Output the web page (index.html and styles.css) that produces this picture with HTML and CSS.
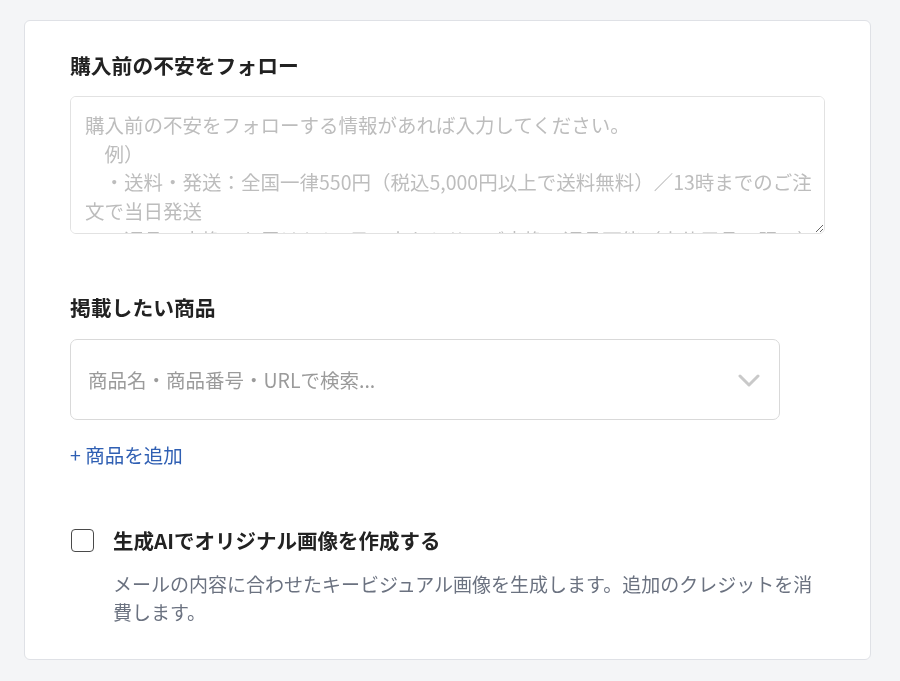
FILE: index.html
```html
<!DOCTYPE html>
<html lang="ja">
<head>
<meta charset="UTF-8">
<meta name="viewport" content="width=device-width, initial-scale=1.0">
<title>メール作成</title>
<link rel="stylesheet" href="styles.css">
</head>
<body>
<div class="card">
  <div class="field">
    <h2 class="label">購入前の不安をフォロー</h2>
    <textarea class="textarea" placeholder="購入前の不安をフォローする情報があれば入力してください。&#10;　例）&#10;　・送料・発送：全国一律550円（税込5,000円以上で送料無料）／13時までのご注文で当日発送&#10;　・返品・交換：お届けから7日以内ならサイズ交換・返品可能（未使用品に限る）"></textarea>
  </div>

  <div class="field products">
    <h2 class="label">掲載したい商品</h2>
    <div class="select">
      <span class="select-placeholder">商品名・商品番号・URLで検索...</span>
      <svg class="chevron" width="22" height="14" viewBox="0 0 22 14">
        <path d="M2 2 L11 11 L20 2" fill="none" stroke="#c9c9c9" stroke-width="3" stroke-linecap="round" stroke-linejoin="round"/>
      </svg>
    </div>
    <a class="add-link" href="#">+ 商品を追加</a>
  </div>

  <div class="ai-option">
    <label class="check-row">
      <input type="checkbox" class="checkbox">
      <span class="check-label">生成AIでオリジナル画像を作成する</span>
    </label>
    <p class="help">メールの内容に合わせたキービジュアル画像を生成します。追加のクレジットを消費します。</p>
  </div>
</div>
</body>
</html>
```

FILE: styles.css
```css
body {
  margin: 0;
  padding: 20px 0 0 24px;
  background: #f4f5f7;
  font-family: "Noto Sans CJK JP", "Noto Sans", sans-serif;
  color: #222;
}
.card {
  width: 847px;
  box-sizing: border-box;
  background: #fff;
  border: 1px solid #dfe1e6;
  border-radius: 6px;
  padding: 29px 45px 33px 45px;
}
.label {
  margin: 0;
  font-size: 20.8px;
  line-height: 31px;
  font-weight: 700;
  color: #222;
}
.textarea {
  display: block;
  width: 755px;
  height: 138px;
  box-sizing: border-box;
  margin-top: 15px;
  padding: 14px 8px 14px 14px;
  border: 1px solid #e2e2e2;
  border-radius: 6px;
  font-family: inherit;
  font-size: 19.5px;
  line-height: 28.7px;
  color: #333;
  resize: vertical;
  outline: none;
  scrollbar-width: none;
}
.textarea::placeholder {
  color: #bdbdbd;
}
.products {
  margin-top: 58px;
}
.select {
  margin-top: 16px;
  width: 710px;
  height: 81px;
  box-sizing: border-box;
  border: 1px solid #d9d9d9;
  border-radius: 7px;
  display: flex;
  align-items: center;
  justify-content: space-between;
  padding: 0 19px 0 17px;
}
.select-placeholder {
  font-size: 19.5px;
  color: #9b9b9b;
}
.chevron {
  display: block;
  margin-top: 2px;
}
.add-link {
  display: inline-block;
  margin-top: 20px;
  font-size: 19.5px;
  line-height: 29px;
  color: #2f5fb3;
  text-decoration: none;
}
.ai-option {
  margin-top: 57px;
}
.check-row {
  display: flex;
  align-items: center;
  gap: 19px;
  cursor: pointer;
}
.checkbox {
  appearance: none;
  margin: 0 0 0 1px;
  width: 23px;
  height: 23px;
  box-sizing: border-box;
  border: 1.5px solid #4a4a4a;
  border-radius: 4px;
  background: #fff;
}
.check-label {
  font-size: 20.5px;
  line-height: 29px;
  font-weight: 700;
  color: #222;
}
.help {
  margin: 15px 0 0 43px;
  font-size: 19px;
  line-height: 28px;
  color: #6b7280;
}
```
